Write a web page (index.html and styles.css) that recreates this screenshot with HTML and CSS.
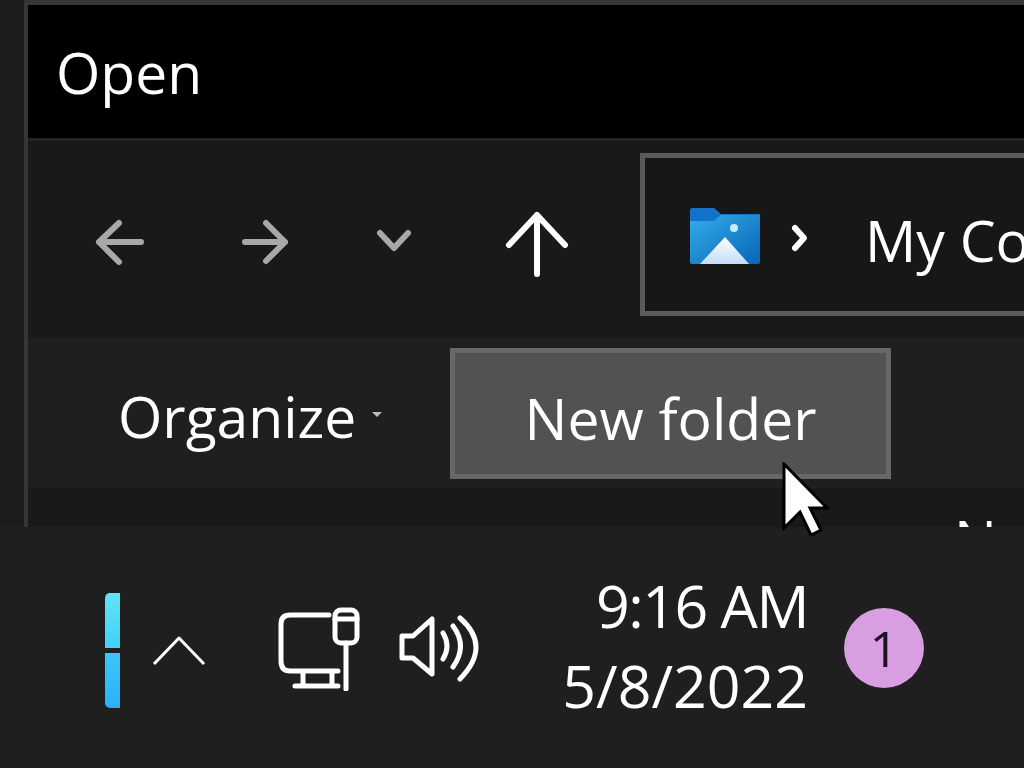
FILE: index.html
```html
<!DOCTYPE html>
<html lang="en">
  <head>
    <meta charset="UTF-8" />
    <title>Open</title>
    <link rel="stylesheet" href="styles.css">
  </head>
  <body>
    <div class="screen">
      <div class="desktop">
        <div class="window">
          <div class="title_bar">Open</div>

          <div class="nav_bar">
            <svg class="ico ico_back" width="60" height="50" viewBox="0 0 60 50"><path d="M51 25H9M29 6L9 25L29 45" /></svg>
            <svg class="ico ico_forward" width="60" height="50" viewBox="0 0 60 50"><path d="M9 25H49M30 6L49 25L30 44" /></svg>
            <svg class="ico ico_recent" width="44" height="50" viewBox="0 0 44 50"><path d="M8 16L22 31L36 16" /></svg>
            <svg class="ico ico_up" width="74" height="70" viewBox="0 0 74 70"><path d="M37 66V7M9 37L37 7L65 37" /></svg>

            <div class="address">
              <svg class="folder" width="70" height="56" viewBox="0 0 70 56">
                <defs>
                  <linearGradient id="folderFront" x1="0" y1="0" x2="1" y2="1">
                    <stop offset="0" stop-color="#35ade9" />
                    <stop offset="1" stop-color="#0664b8" />
                  </linearGradient>
                  <linearGradient id="peak" x1="0" y1="0" x2="0" y2="1">
                    <stop offset="0" stop-color="#ffffff" />
                    <stop offset="1" stop-color="#c4dcf6" />
                  </linearGradient>
                </defs>
                <path d="M2 0H24L31 6H70V30H0V2Q0 0 2 0Z" fill="#1274c6" />
                <path d="M0 13H24L31 7H68Q70 7 70 9V54Q70 56 68 56H2Q0 56 0 54Z" fill="url(#folderFront)" />
                <path d="M10 56L35 29L59 56Z" fill="url(#peak)" />
                <circle cx="44" cy="20" r="4" fill="#c9ecfb" />
              </svg>
              <svg class="ico ico_crumb" width="22" height="32" viewBox="0 0 22 32"><path d="M5 6L14 16L5 26" /></svg>
              <span class="address_text">My Computer</span>
            </div>
          </div>

          <div class="command_bar">
            <div class="organize">
              <span>Organize</span>
              <span class="caret"></span>
            </div>
            <div class="new_folder">New folder</div>
          </div>

          <div class="file_list">
            <div class="list_side"></div>
            <div class="list_head">Name</div>
          </div>
        </div>
      </div>

      <div class="taskbar">
        <div class="app_bar">
          <span class="app_bar_top"></span>
          <span class="app_bar_bottom"></span>
        </div>
        <svg class="ico tray_up" width="56" height="32" viewBox="0 0 56 32"><path d="M3 29L28 3L53 29" /></svg>
        <svg class="ico tray_net" width="84" height="84" viewBox="0 0 84 84">
          <path d="M52 8H13Q4 8 4 17V54Q4 64 13 64H61M26 65V79M55 65V79M18 79H61" />
          <rect x="58" y="3" width="22" height="33" rx="6" />
          <path d="M58 12H80M69 36V82" />
        </svg>
        <svg class="ico tray_sound" width="84" height="72" viewBox="0 0 84 72">
          <path d="M3 21H14L33 4V59L14 43H3Z" />
          <path d="M44 18Q52 31 44 44M54 11Q69 31 54 52M61 3Q93 31 61 64" />
        </svg>
        <div class="clock">
          <div class="clock_time">9:16 AM</div>
          <div>5/8/2022</div>
        </div>
        <div class="badge">1</div>
      </div>

      <svg class="cursor" width="50" height="76" viewBox="0 0 50 76">
        <path d="M2 2V66L18 50L29 73L39 68L28 46H45Z" fill="#fff" stroke="#000" stroke-width="3" />
      </svg>
    </div>
  </body>
</html>
```

FILE: styles.css
```css
html,
body {
  margin: 0;
  padding: 0;
}
body {
  background: #1f1f1f;
  color: white;
  font-family: "Open Sans", "Noto Sans", sans-serif;
  font-weight: 400;
  overflow: hidden;
}
.screen {
  position: relative;
  width: 1024px;
  height: 768px;
  overflow: hidden;
  display: flex;
  flex-direction: column;
}
.desktop {
  height: 527px;
  padding-left: 24px;
  background: #1c1c1c;
  overflow: hidden;
  flex-shrink: 0;
}
.window {
  height: 527px;
  width: 1000px;
  box-sizing: border-box;
  border-top: 5px solid #363636;
  border-left: 4px solid #363636;
  display: flex;
  flex-direction: column;
}
.title_bar {
  height: 133px;
  flex-shrink: 0;
  box-sizing: border-box;
  padding: 0 0 0 28px;
  background: black;
  font-size: 57px;
  line-height: 134px;
}
.nav_bar {
  height: 200px;
  flex-shrink: 0;
  box-sizing: border-box;
  border-top: 3px solid #252525;
  padding: 12px 0 0 62px;
  background: #191919;
  display: flex;
  align-items: flex-start;
}
.ico {
  display: block;
  flex-shrink: 0;
  fill: none;
  stroke-linecap: round;
  stroke-linejoin: round;
}
.ico_back,
.ico_forward,
.ico_recent {
  stroke: #a8a8a8;
  stroke-width: 6;
  margin-top: 64px;
}
.ico_forward {
  margin-left: 86px;
}
.ico_recent {
  margin-left: 76px;
}
.ico_up {
  stroke: white;
  stroke-width: 6;
  margin-top: 55px;
  margin-left: 84px;
}
.address {
  height: 163px;
  width: 500px;
  margin-left: 66px;
  box-sizing: border-box;
  border: 5px solid #5a5a5a;
  padding-left: 45px;
  background: #171717;
  display: flex;
  align-items: center;
  flex-shrink: 0;
}
.folder {
  flex-shrink: 0;
  margin-top: 3px;
}
.ico_crumb {
  stroke: white;
  stroke-width: 6;
  margin-left: 30px;
  margin-top: 6px;
}
.address_text {
  margin-left: 53px;
  margin-top: 10px;
  font-size: 57px;
  white-space: nowrap;
}
.command_bar {
  height: 150px;
  flex-shrink: 0;
  box-sizing: border-box;
  padding-left: 90px;
  background: #1f1f1f;
  display: flex;
  align-items: center;
}
.organize {
  width: 332px;
  font-size: 57px;
  display: flex;
  align-items: center;
  padding-top: 6px;
  box-sizing: border-box;
}
.caret {
  width: 0;
  height: 0;
  margin-left: 16px;
  margin-top: -4px;
  border-left: 5px solid transparent;
  border-right: 5px solid transparent;
  border-top: 5px solid #bdbdbd;
}
.new_folder {
  width: 441px;
  height: 131px;
  box-sizing: border-box;
  border: 5px solid #686868;
  background: #525252;
  font-size: 57px;
  line-height: 130px;
  text-align: center;
}
.file_list {
  height: 39px;
  flex-shrink: 0;
  background: #191919;
  display: flex;
  overflow: hidden;
}
.list_side {
  width: 9px;
  background: #141414;
}
.list_head {
  margin-left: 926px;
  margin-top: 22px;
  font-size: 57px;
  line-height: 60px;
  white-space: nowrap;
}
.taskbar {
  flex: 1;
  box-sizing: border-box;
  padding: 6px 0 0 105px;
  background: #1f1f1f;
  display: flex;
  align-items: center;
}
.app_bar {
  width: 15px;
  height: 115px;
  display: flex;
  flex-direction: column;
  gap: 5px;
  margin-top: -1px;
}
.app_bar_top {
  flex: 1;
  border-radius: 5px 0 0 0;
  background: linear-gradient(#62e4f6, #43cff9);
}
.app_bar_bottom {
  flex: 1;
  border-radius: 0 0 0 5px;
  background: linear-gradient(#3ec6f6, #2bb0f8);
}
.tray_up {
  stroke: white;
  stroke-width: 3;
  stroke-linecap: butt;
  margin-left: 31px;
}
.tray_net {
  stroke: white;
  stroke-width: 5;
  margin-left: 70px;
  margin-top: -3px;
}
.tray_sound {
  stroke: white;
  stroke-width: 5;
  margin-left: 38px;
}
.clock {
  width: 320px;
  margin-left: 5px;
  margin-top: -11px;
  font-size: 59px;
  line-height: 80px;
  text-align: right;
  flex-shrink: 0;
}
.clock_time {
  letter-spacing: -1.5px;
}
.badge {
  width: 80px;
  height: 80px;
  margin-left: 36px;
  margin-top: -6px;
  border-radius: 50%;
  background: #d89ee1;
  color: #1a1020;
  font-size: 50px;
  line-height: 80px;
  text-align: center;
  flex-shrink: 0;
}
.cursor {
  position: absolute;
  left: 782px;
  top: 462px;
}
```
